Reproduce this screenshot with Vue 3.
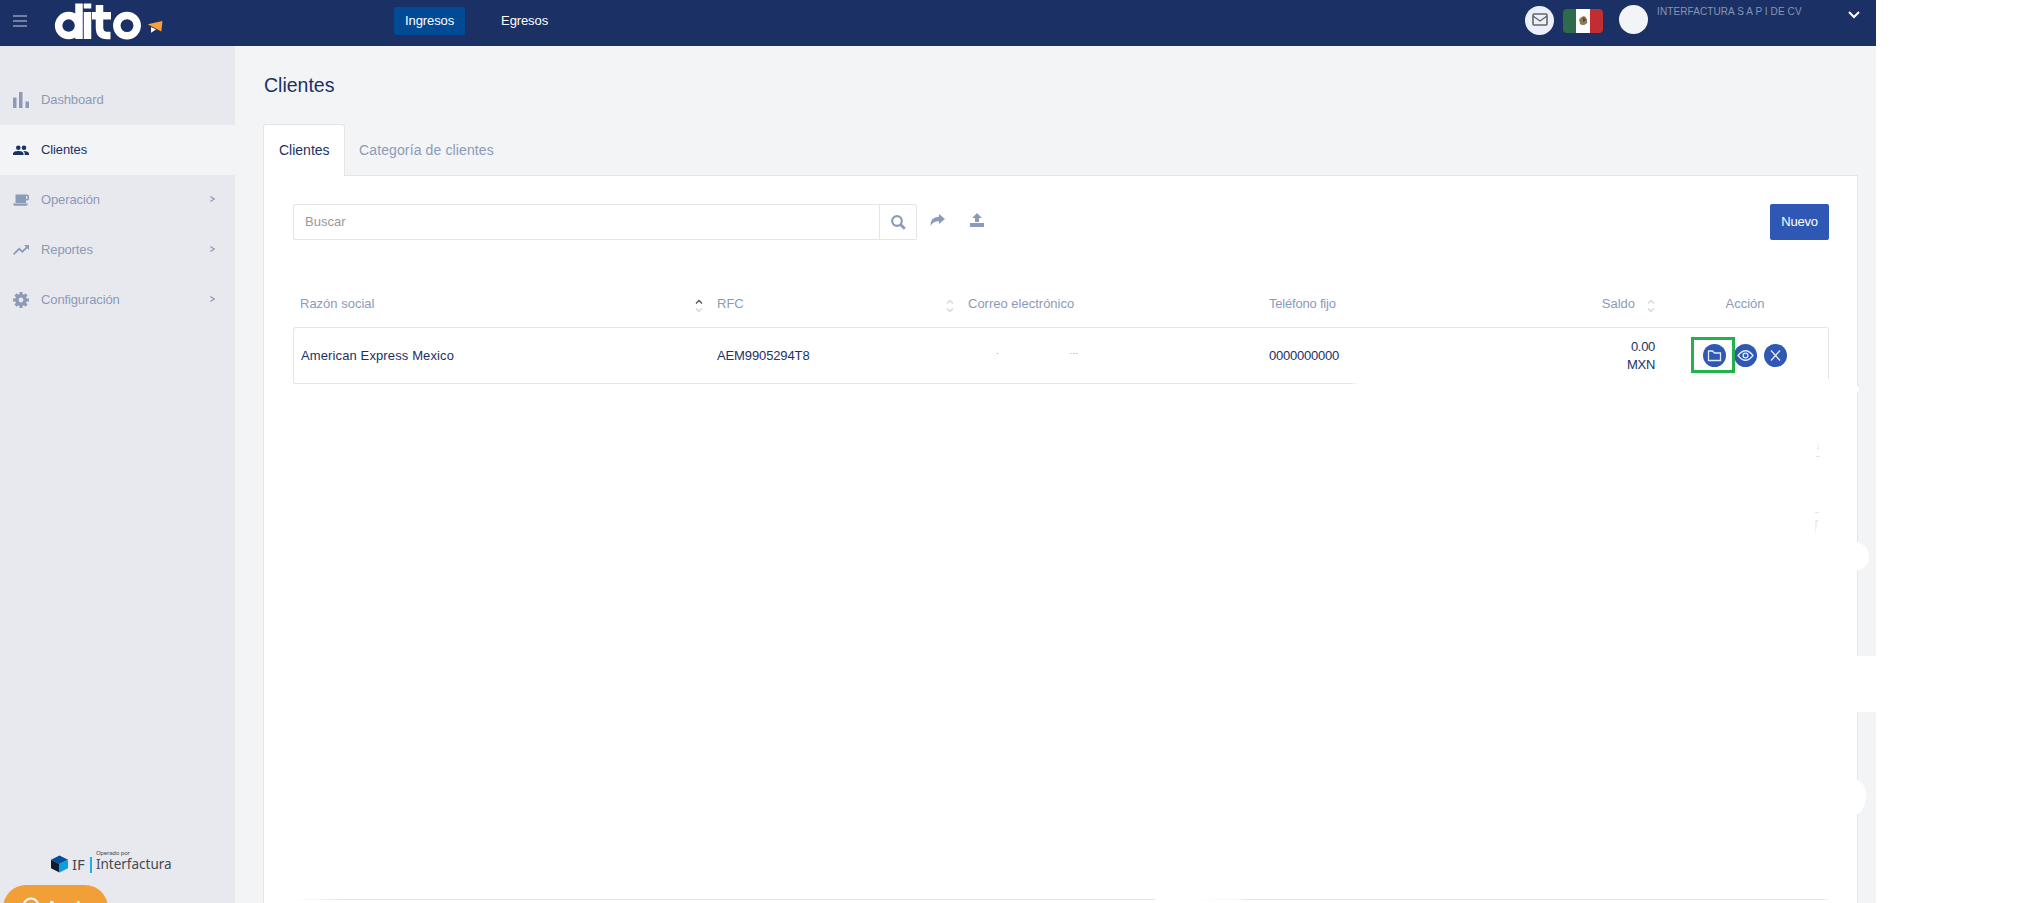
<template>
  <div class="app">
    <header class="topbar">
      <svg class="menu-icon" viewBox="0 0 14 12" width="14" height="12">
        <path d="M0 1h14M0 6h14M0 11h14" stroke="#8f9cbb" stroke-width="1.3" />
      </svg>
      <div class="logo">
        <svg viewBox="0 0 114 42" width="114" height="42">
          <g fill="none" stroke="#fff" stroke-width="7.5">
            <circle cx="17.6" cy="25.6" r="10" />
            <circle cx="76" cy="25.6" r="10.2" />
            <path d="M28 3.500v35.500M36.500 12v27M36.500 3.500v5" />
            <path d="M48.500 5v22.500q0 8 7.500 8h3.500M41 15.700h19" />
          </g>
          <path d="M96.700 24.300l14.800-3.300-1.200 10.500z" fill="#f9a03c" />
          <path d="M100 27l5 2.500-5 3.300z" fill="#fff" />
        </svg>
      </div>
      <nav class="modules">
        <a v-for="m in modules" :key="m" class="module" :class="{ active: m === currentModule }">{{ m }}</a>
      </nav>
      <div class="account">
        <span class="mail">
          <svg viewBox="0 0 16 13" width="16" height="13">
            <rect x="1" y="1" width="14" height="11" rx="1" fill="none" stroke="#666" stroke-width="1.600" />
            <path d="M1 3l7 5 7-5" fill="none" stroke="#666" stroke-width="1.400" />
          </svg>
        </span>
        <svg class="flag" viewBox="0 0 40 24" width="40" height="24">
          <path d="M4 0h9v24H4a4 4 0 0 1-4-4V4a4 4 0 0 1 4-4z" fill="#2d6b4a" />
          <path d="M13 0h14v24H13z" fill="#fff" />
          <path d="M27 0h9a4 4 0 0 1 4 4v16a4 4 0 0 1-4 4h-9z" fill="#c02e32" />
          <path d="M16 11q1-3 5-4 4 2 3 7l-3 2q-4 0-5-5z" fill="#96754f" />
          <path d="M17 14q3 3 7-1" fill="none" stroke="#6d8b72" stroke-width="1.500" />
          <path d="M20 8l3 3-3 2z" fill="#5a4438" />
        </svg>
        <span class="avatar" />
        <span class="company">INTERFACTURA S A P I DE CV</span>
        <svg class="chevron" viewBox="0 0 12 8" width="12" height="8">
          <path d="M1 1l5 5 5-5" fill="none" stroke="#fff" stroke-width="2" />
        </svg>
      </div>
    </header>

    <div class="body">
      <aside class="sidebar">
        <a v-for="item in menu" :key="item.label" class="menu-item" :class="{ active: item.active }">
          <svg viewBox="0 0 16 16" width="16" height="16" fill="currentColor">
            <path :d="item.icon" fill-rule="evenodd" />
          </svg>
          <span class="menu-label">{{ item.label }}</span>
          <svg v-if="item.children" class="arrow" viewBox="0 0 5 6" width="5" height="6">
            <path d="M.3.6L4.200 3 .3 5.400" fill="none" stroke="currentColor" stroke-width="1.200" />
          </svg>
        </a>

        <div class="powered">
          <svg viewBox="0 0 18 18" width="17" height="18">
            <path d="M9 0l9 4.500L9 9 0 4.500z" fill="#004f9f" />
            <path d="M0 4.500L9 9v9l-9-4.500z" fill="#0d1c2e" />
            <path d="M18 4.500L9 9v9l9-4.500z" fill="#0a9fe0" />
          </svg>
          <span class="if">IF</span>
          <span class="powered-bar" />
          <span class="powered-text">
            <small>Operado por</small>
            <span>Interfactura</span>
          </span>
        </div>
        <div class="help">
          <svg viewBox="0 0 18 18" width="18" height="18">
            <circle cx="9" cy="9" r="7.500" fill="none" stroke="#fff" stroke-width="2" />
          </svg>
          <span>Ayuda</span>
        </div>
      </aside>

      <main class="content">
        <h1>Clientes</h1>
        <div class="tabs">
          <a class="tab active">Clientes</a>
          <a class="tab">Categoría de clientes</a>
        </div>
        <section class="panel">
          <div class="toolbar">
            <div class="search">
              <input type="text" placeholder="Buscar" />
              <button type="button">
                <svg viewBox="0 0 15 15" width="15" height="15" fill="none" stroke="#8c9aba">
                  <circle cx="6" cy="6" r="4.800" stroke-width="2.200" />
                  <path d="M9.500 9.500l4.300 4.300" stroke-width="2.800" />
                </svg>
              </button>
            </div>
            <svg class="tool share" viewBox="0 0 15 12" width="15" height="12">
              <path d="M9 0l6 5-6 5V7.200Q3 7 .5 12 0 3 9 2.800z" fill="#8c9aba" />
            </svg>
            <svg class="tool upload" viewBox="0 0 14 14" width="14" height="14">
              <path d="M7 0l5 5H9v4H5V5H2zM0 10h14v4H0z" fill="#8c9aba" />
            </svg>
            <button type="button" class="new">Nuevo</button>
          </div>

          <div class="grid grid-head">
            <span v-for="col in columns" :key="col.key" class="cell" :class="col.key">
              <span class="col-label">{{ col.label }}</span>
              <svg v-if="col.sort" class="sort" viewBox="0 0 8 14" width="8" height="14" fill="none" stroke-width="1.400">
                <path d="M1 4.500l3-3 3 3" :stroke="col.sort === 'asc' ? '#555' : '#d6d8e2'" />
                <path d="M1 9.500l3 3 3-3" stroke="#d6d8e2" />
              </svg>
            </span>
          </div>

          <div v-for="row in rows" :key="row.rfc" class="grid grid-row">
            <span class="cell name">{{ row.name }}</span>
            <span class="cell rfc">{{ row.rfc }}</span>
            <span class="cell mailto"><i class="speck">.</i><i class="dots">...</i></span>
            <span class="cell phone">{{ row.phone }}</span>
            <span class="cell balance">{{ row.balance }}<br />MXN</span>
            <span class="cell action">
              <span class="round">
                <svg viewBox="0 0 23 23" width="23" height="23">
                  <path d="M5.500 7h4l2 2h6v7.500h-12z" />
                </svg>
                <span class="highlight" />
              </span>
              <span class="round">
                <svg viewBox="0 0 23 23" width="23" height="23">
                  <path d="M4 11.500q7.500-9.500 15 0-7.500 9.500-15 0z" />
                  <circle cx="11.500" cy="11.500" r="2.400" />
                </svg>
              </span>
              <span class="round">
                <svg viewBox="0 0 23 23" width="23" height="23">
                  <path d="M7 6.500l9 10M16 6.500l-9 10" />
                </svg>
              </span>
            </span>
            <span class="row-line" />
          </div>

          <div class="grid-foot"><span /><span /></div>

          <svg class="marks" viewBox="0 0 10 96" width="10" height="96">
            <path d="M3 0l1 7H2zM0 80h3L0 95z" fill="#f0f1f3" />
            <path d="M2 7.500h2M1 15.500h4M0 71.500h4M0 79.500h3" stroke="#e4e5e7" />
          </svg>
          <span class="patch patch-notch" />
          <span class="patch patch-upper" />
          <span class="patch patch-band" />
          <span class="patch patch-lower" />
        </section>
      </main>
    </div>
  </div>
</template>

<script setup>
import { ref } from 'vue'

const modules = ['Ingresos', 'Egresos']
const currentModule = ref('Ingresos')

const menu = [
  { label: 'Dashboard', icon: 'M0 5.500h3.500V16H0zM6 0h3.500v16H6zM12.500 9.500H16V16h-3.500z' },
  {
    label: 'Clientes',
    active: true,
    icon: 'M5.300 3.500a2.300 2.300 0 1 1 0 4.600 2.300 2.300 0 0 1 0-4.600zM11 3.500a2.300 2.300 0 1 1 0 4.600 2.300 2.300 0 0 1 0-4.600zM0 13v-1.500C0 9.800 3 9 5.300 9s5.200.8 5.200 2.500V13zM11.700 13v-1.500q0-1.600-1.500-2.500c2.400-.1 5.800.8 5.800 2.500V13z',
  },
  {
    label: 'Operación',
    children: true,
    icon: 'M2.500 2.500H14a2 2 0 0 1 2 2v2a2 2 0 0 1-2 2h-1V11H2.500zM13 4v3h1.300V4zM0 11.500h15q-.5 1.800-1.500 2.200h-12Q.3 13.300 0 11.500z',
  },
  {
    label: 'Reportes',
    children: true,
    icon: 'M11 3h5v5l-1.800-1.800L9.300 11 6.200 8 1.200 13 0 11.800l6.200-6.200 3.100 3L13 5z',
  },
  {
    label: 'Configuración',
    children: true,
    icon: 'M6.500 0h3v2.100l1.400.6 1.500-1.500 2.200 2.200-1.500 1.500.6 1.600H16v3h-2.300l-.6 1.600 1.500 1.500-2.200 2.200-1.500-1.500-1.400.6V16h-3v-2.100l-1.400-.6-1.500 1.500-2.200-2.200 1.500-1.500-.6-1.600H0v-3h2.300l.6-1.600-1.500-1.500 2.200-2.200 1.500 1.500 1.400-.6zM8 5.600a2.400 2.400 0 1 0 0 4.800 2.400 2.400 0 0 0 0-4.800z',
  },
]

const columns = [
  { key: 'name', label: 'Razón social', sort: 'asc' },
  { key: 'rfc', label: 'RFC', sort: 'none' },
  { key: 'mailto', label: 'Correo electrónico' },
  { key: 'phone', label: 'Teléfono fijo' },
  { key: 'balance', label: 'Saldo', sort: 'none' },
  { key: 'action', label: 'Acción' },
]

const rows = [
  { name: 'American Express Mexico', rfc: 'AEM9905294T8', phone: '0000000000', balance: '0.00' },
]
</script>

<style>
body {
  background: #fff;
}
</style>

<style scoped>
.app,
.app * {
  box-sizing: border-box;
}
.app {
  width: 1876px;
  height: 903px;
  overflow: hidden;
  display: flex;
  flex-direction: column;
  font-family: "Liberation Sans", Arial, sans-serif;
  font-size: 13px;
  color: #1b3165;
  background: #f3f4f6;
}

/* barra superior */
.topbar {
  flex: none;
  height: 46px;
  display: flex;
  align-items: flex-start;
  background: #1b3165;
  color: #fff;
}
.menu-icon { margin: 15px 0 0 13px; }
.logo { margin-left: 24px; width: 114px; }
.modules {
  display: flex;
  gap: 25px;
  margin: 7px 0 0 229px;
}
.module {
  height: 28px;
  line-height: 27px;
  padding: 0 11px;
  border-radius: 2px;
  letter-spacing: -0.1px;
}
.module.active { background: #004a96; }
.account {
  margin-left: auto;
  display: flex;
  align-items: flex-start;
}
.mail {
  width: 29px;
  height: 29px;
  margin-top: 6px;
  border-radius: 50%;
  background: #ecf0fc;
  display: flex;
  align-items: center;
  justify-content: center;
}
.mail svg { margin-top: -3px; }
.flag { margin: 9px 0 0 9px; }
.avatar {
  width: 29px;
  height: 29px;
  margin: 5px 0 0 16px;
  border-radius: 50%;
  background: #f3f4f6;
}
.company {
  width: 191px;
  margin: 5px 0 0 9px;
  font-size: 10px;
  line-height: 13px;
  letter-spacing: 0.1px;
  color: #8693b5;
  white-space: nowrap;
}
.chevron { margin: 11px 16px 0 0; }

/* menú lateral */
.body {
  flex: 1;
  min-height: 0;
  display: flex;
}
.sidebar {
  position: relative;
  flex: none;
  width: 235px;
  padding-top: 29px;
  background: #e8e9ee;
}
.menu-item {
  height: 50px;
  display: flex;
  align-items: center;
  padding: 0 20px 0 13px;
  color: #8c9aba;
}
.menu-item.active {
  background: #f3f4f6;
  color: #1b3165;
}
.menu-label {
  margin: -2px auto 0 12px;
  letter-spacing: -0.12px;
}
.arrow { margin-top: -3px; }

.powered {
  position: absolute;
  left: 51px;
  bottom: 30px;
  display: flex;
  align-items: flex-end;
  font-family: "Noto Sans", "Open Sans", sans-serif;
  color: #454a52;
}
.if {
  margin-left: 4px;
  font-size: 15px;
  line-height: 18px;
}
.powered-bar {
  width: 2px;
  height: 16px;
  margin: 0 4px 0 5px;
  background: #1fb0e8;
}
.powered-text {
  display: flex;
  flex-direction: column;
  font-size: 13.500px;
  line-height: 17px;
}
.powered-text small {
  font-size: 6px;
  line-height: 5px;
  letter-spacing: -0.2px;
}
.help {
  position: absolute;
  left: 3px;
  top: 839px;
  width: 105px;
  height: 46px;
  border-radius: 23px;
  background: #f29f38;
  color: #fff;
  display: flex;
  gap: 7px;
  padding: 12px 0 0 19px;
  font: bold 13.500px/18px "Liberation Sans", sans-serif;
}

/* contenido */
.content {
  flex: 1;
  min-width: 0;
  display: flex;
  flex-direction: column;
  padding: 0 18px 0 28px;
}
h1 {
  margin: 26px 0 0 1px;
  font-size: 19.500px;
  line-height: 26px;
  font-weight: 400;
}
.tabs {
  display: flex;
  margin-top: 26px;
  height: 52px;
  font-size: 14px;
}
.tab {
  padding: 0 14px;
  line-height: 53px;
  letter-spacing: 0.12px;
  color: #8c9aba;
}
.tab.active {
  position: relative;
  z-index: 1;
  width: 82px;
  padding: 0 0 0 15px;
  line-height: 51px;
  letter-spacing: 0;
  background: #fff;
  color: #1b3165;
  border: 1px solid #e4e5e7;
  border-bottom: 0;
  border-radius: 3px 3px 0 0;
}
.panel {
  position: relative;
  flex: 1;
  margin-top: -1px;
  padding: 28px 28px 0 29px;
  background: #fff;
  border: 1px solid #e4e5e7;
  border-bottom: 0;
}
.toolbar {
  display: flex;
  height: 36px;
}
.search {
  width: 624px;
  display: flex;
  border: 1px solid #e4e5e7;
  border-radius: 2px;
}
.search input {
  flex: 1;
  border: 0;
  outline: 0;
  padding: 0 11px 2px;
  background: none;
  font: inherit;
}
.search input::placeholder { color: #999; }
.search button {
  width: 37px;
  padding: 3px 0 0;
  border: 0;
  border-left: 1px solid #e4e5e7;
  background: none;
}
.share { margin: 10px 0 0 13px; }
.upload { margin: 9px 0 0 25px; }
.new {
  width: 59px;
  height: 36px;
  margin-left: auto;
  padding: 0 0 2px;
  border: 0;
  border-radius: 2px;
  background: #2f58b4;
  color: #fff;
  font: inherit;
  letter-spacing: -0.2px;
}

.grid {
  display: grid;
  grid-template-columns: 417px 251px 301px 266px 127px 174px;
  width: 1536px;
}
.grid-head {
  height: 87px;
  color: #8c9aba;
}
.grid-head .cell {
  display: flex;
  justify-content: space-between;
  padding: 56px 7px 0 7px;
  line-height: 16px;
}
.grid-head .phone { letter-spacing: -0.2px; }
.sort { margin-top: 3px; }
.grid-head .balance {
  justify-content: flex-end;
  gap: 12px;
  padding-right: 0;
}
.grid-head .action {
  justify-content: center;
  padding: 56px 0 0 6px;
}
.grid-row {
  position: relative;
  height: 57px;
  border: 1px solid #e4e5e7;
  border-right: 0;
  border-bottom: 0;
  border-radius: 3px;
  align-items: center;
}
.grid-row .cell {
  padding-left: 7px;
  padding-bottom: 2px;
}
.grid-row .name { letter-spacing: 0.12px; }
.grid-row .rfc,
.grid-row .phone {
  padding-left: 6px;
  letter-spacing: -0.12px;
}
.grid-row .phone { letter-spacing: -0.24px; }
.grid-row .mailto {
  display: flex;
  gap: 71px;
  padding-left: 34px;
  color: #8f94c4;
}
.grid-row .mailto i {
  font-style: normal;
  font-size: 9px;
  margin-top: -9px;
}
.grid-row .mailto .dots { letter-spacing: 0.5px; }
.grid-row .balance {
  text-align: right;
  line-height: 18px;
  letter-spacing: -0.3px;
  padding: 0 1px 0 0;
}
.grid-row .action {
  display: flex;
  gap: 7.500px;
  padding-left: 47px;
}
.round {
  position: relative;
  width: 23px;
  height: 23px;
  border-radius: 50%;
  background: #2f58b4;
}
.round svg {
  display: block;
  fill: none;
  stroke: #e4eafa;
  stroke-width: 1.300;
}
.highlight {
  position: absolute;
  z-index: 1;
  left: -12px;
  top: -7px;
  width: 44px;
  height: 36px;
  border: 3px solid #22b14c;
}
.row-line {
  position: absolute;
  left: 0;
  right: 0;
  top: 0;
  height: 56px;
  background:
    linear-gradient(90deg, #e4e5e7 1056px, #fff 1066px) left bottom / 100% 1px no-repeat,
    linear-gradient(#e4e5e7, #e4e5e7) right top / 1px 51px no-repeat;
}
.grid-foot {
  position: absolute;
  left: 29px;
  right: 28px;
  bottom: 3px;
  display: flex;
  gap: 18px;
}
.grid-foot span {
  width: 864px;
  height: 1px;
  background: linear-gradient(90deg, #fff, #e4e5e7 50px, #e4e5e7 860px, #fff);
}
.grid-foot span + span {
  width: 654px;
  background: linear-gradient(90deg, #fff, #f8f8f8 60px, #e4e5e7 72px, #e4e5e7 648px, #fff);
}
.marks {
  position: absolute;
  left: 1551px;
  top: 265px;
}

/* zonas en blanco sobre el borde derecho */
.patch {
  position: absolute;
  left: 1590px;
  background: #fff;
}
.patch-notch { top: 210px; width: 5px; height: 6px; border-radius: 0 3px 3px 0; }
.patch-upper { top: 366px; width: 15px; height: 29px; border-radius: 0 15px 15px 0; }
.patch-band { top: 480px; width: 30px; height: 56px; }
.patch-lower { top: 603px; width: 12px; height: 36px; border-radius: 0 12px 12px 0 / 0 16px 20px 0; }
</style>
